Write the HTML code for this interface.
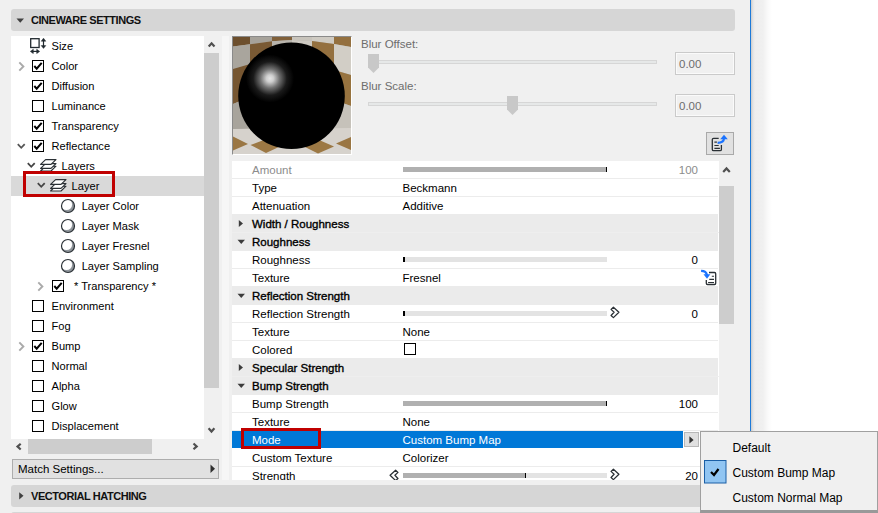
<!DOCTYPE html>
<html><head><meta charset="utf-8">
<style>
*{margin:0;padding:0;box-sizing:border-box}
html,body{width:878px;height:513px;overflow:hidden;background:#fff}
body{position:relative;font-family:"Liberation Sans",sans-serif;color:#000}
.a{position:absolute}
.t{position:absolute;white-space:nowrap;line-height:1}
#panel{position:absolute;left:0;top:0;width:750px;height:513px;background:#f0f0f0;overflow:hidden}
.hdr{position:absolute;left:11px;width:724px;height:22px;background:#d6d6d6;border-radius:3px}
.hdr .t{font-weight:bold;font-size:11px;letter-spacing:-0.45px;color:#111}
#tree{position:absolute;left:11px;top:36px;width:193px;height:403px;background:#fff;overflow:hidden}
#tree .t{font-size:11.5px}
.cb{position:absolute;width:12px;height:12px;border:1px solid #000;background:#fff}
.tbl{position:absolute;left:232px;top:161px;width:487px;height:319px;background:#fff;overflow:hidden}
.row{position:absolute;left:0;width:486px;height:18px;border-bottom:1px solid #ececec}
.grp{position:absolute;left:0;width:487px;height:18px;background:#ebebeb}
.tbl .t{font-size:11.5px}
</style></head><body>
<div id="panel">
  <!-- header -->
  <div class="hdr" style="top:9px">
    <svg class="a" style="left:5px;top:9px" width="9" height="5"><path d="M0.5 0.5 L8 0.5 L4.25 4.8 Z" fill="#404040"/></svg>
    <div class="t" style="left:20px;top:6px">CINEWARE SETTINGS</div>
  </div>

  <!-- tree -->
  <div id="tree"></div>
<div class="a" style="left:11px;top:176px;width:193px;height:20px;background:#d9d9d9"></div>
<svg class="a" style="left:29px;top:37px" width="20" height="17"><rect x="1.7" y="1.7" width="8.4" height="8.8" fill="none" stroke="#222a30" stroke-width="1.3"/><path d="M14.5 2.5 V10" stroke="#222a30" stroke-width="1.2"/><path d="M12.2 4.2 L14.5 1.2 L16.8 4.2 Z M12.2 8.6 L14.5 11.4 L16.8 8.6 Z" fill="#222a30" stroke="#222a30" stroke-width="0.5" stroke-linejoin="round"/><path d="M3 14.4 H9" stroke="#222a30" stroke-width="1.2"/><path d="M4.3 12.2 L1.3 14.4 L4.3 16.6 Z M7.7 12.2 L10.7 14.4 L7.7 16.6 Z" fill="#222a30" stroke="#222a30" stroke-width="0.5" stroke-linejoin="round"/></svg>
<div class="t" style="left:51.5px;top:41.1px;font-size:11.1px;">Size</div>
<svg class="a" style="left:18px;top:60px" width="8" height="12"><path d="M1.3 2.3 L5.4 6.5 L1.3 10.7" stroke="#aaaaaa" stroke-width="1.9" fill="none"/></svg>
<svg class="a" style="left:32px;top:60px" width="12" height="12"><rect x="0.5" y="0.5" width="11" height="11" fill="#fff" stroke="#000" stroke-width="1"/><path d="M2.3 6 L4.7 8.7 L9.7 2.9" stroke="#000" stroke-width="2" fill="none" stroke-linejoin="miter" stroke-linecap="butt"/></svg>
<div class="t" style="left:51.5px;top:61.1px;font-size:11.1px;">Color</div>
<svg class="a" style="left:32px;top:80px" width="12" height="12"><rect x="0.5" y="0.5" width="11" height="11" fill="#fff" stroke="#000" stroke-width="1"/><path d="M2.3 6 L4.7 8.7 L9.7 2.9" stroke="#000" stroke-width="2" fill="none" stroke-linejoin="miter" stroke-linecap="butt"/></svg>
<div class="t" style="left:51.5px;top:81.1px;font-size:11.1px;">Diffusion</div>
<svg class="a" style="left:32px;top:100px" width="12" height="12"><rect x="0.5" y="0.5" width="11" height="11" fill="#fff" stroke="#000" stroke-width="1"/></svg>
<div class="t" style="left:51.5px;top:101.1px;font-size:11.1px;">Luminance</div>
<svg class="a" style="left:32px;top:120px" width="12" height="12"><rect x="0.5" y="0.5" width="11" height="11" fill="#fff" stroke="#000" stroke-width="1"/><path d="M2.3 6 L4.7 8.7 L9.7 2.9" stroke="#000" stroke-width="2" fill="none" stroke-linejoin="miter" stroke-linecap="butt"/></svg>
<div class="t" style="left:51.5px;top:121.1px;font-size:11.1px;">Transparency</div>
<svg class="a" style="left:15.7px;top:140.5px" width="12" height="12"><path d="M1.8 3.2 L5.25 6.8 L8.7 3.2" stroke="#555" stroke-width="1.8" fill="none"/></svg>
<svg class="a" style="left:32px;top:140px" width="12" height="12"><rect x="0.5" y="0.5" width="11" height="11" fill="#fff" stroke="#000" stroke-width="1"/><path d="M2.3 6 L4.7 8.7 L9.7 2.9" stroke="#000" stroke-width="2" fill="none" stroke-linejoin="miter" stroke-linecap="butt"/></svg>
<div class="t" style="left:51.5px;top:141.1px;font-size:11.1px;">Reflectance</div>
<svg class="a" style="left:26px;top:160px" width="12" height="12"><path d="M1.8 3.2 L5.25 6.8 L8.7 3.2" stroke="#444" stroke-width="1.8" fill="none"/></svg>
<svg class="a" style="left:39.7px;top:159px" width="18" height="14"><path d="M5.6 7.199999999999999 H16 L11 12.0 H0.6 Z" fill="#fff" stroke="#2a3035" stroke-width="1.15" stroke-linejoin="round"/><path d="M5.6 4.6 H16 L11 9.4 H0.6 Z" fill="#fff" stroke="#2a3035" stroke-width="1.15" stroke-linejoin="round"/><path d="M5.6 0.6 H16 L11 5.4 H0.6 Z" fill="#fff" stroke="#2a3035" stroke-width="1.15" stroke-linejoin="round"/></svg>
<div class="t" style="left:61.6px;top:161.1px;font-size:11.1px;">Layers</div>
<svg class="a" style="left:36px;top:180px" width="12" height="12"><path d="M1.8 3.2 L5.25 6.8 L8.7 3.2" stroke="#444" stroke-width="1.8" fill="none"/></svg>
<svg class="a" style="left:49.7px;top:179px" width="18" height="14"><path d="M5.6 7.199999999999999 H16 L11 12.0 H0.6 Z" fill="#fff" stroke="#2a3035" stroke-width="1.15" stroke-linejoin="round"/><path d="M5.6 4.6 H16 L11 9.4 H0.6 Z" fill="#fff" stroke="#2a3035" stroke-width="1.15" stroke-linejoin="round"/><path d="M5.6 0.6 H16 L11 5.4 H0.6 Z" fill="#fff" stroke="#2a3035" stroke-width="1.15" stroke-linejoin="round"/></svg>
<div class="t" style="left:71.6px;top:181.1px;font-size:11.1px;">Layer</div>
<svg class="a" style="left:60px;top:198px" width="16" height="16"><circle cx="8" cy="8" r="6.5" fill="#8e949a"/><circle cx="6.5" cy="6.5" r="5.6" fill="#fff"/><circle cx="8" cy="8" r="6.5" fill="none" stroke="#2a3035" stroke-width="1.2"/></svg>
<div class="t" style="left:81.7px;top:201.1px;font-size:11.1px;">Layer Color</div>
<svg class="a" style="left:60px;top:218px" width="16" height="16"><circle cx="8" cy="8" r="6.5" fill="#8e949a"/><circle cx="6.5" cy="6.5" r="5.6" fill="#fff"/><circle cx="8" cy="8" r="6.5" fill="none" stroke="#2a3035" stroke-width="1.2"/></svg>
<div class="t" style="left:81.7px;top:221.1px;font-size:11.1px;">Layer Mask</div>
<svg class="a" style="left:60px;top:238px" width="16" height="16"><circle cx="8" cy="8" r="6.5" fill="#8e949a"/><circle cx="6.5" cy="6.5" r="5.6" fill="#fff"/><circle cx="8" cy="8" r="6.5" fill="none" stroke="#2a3035" stroke-width="1.2"/></svg>
<div class="t" style="left:81.7px;top:241.1px;font-size:11.1px;">Layer Fresnel</div>
<svg class="a" style="left:60px;top:258px" width="16" height="16"><circle cx="8" cy="8" r="6.5" fill="#8e949a"/><circle cx="6.5" cy="6.5" r="5.6" fill="#fff"/><circle cx="8" cy="8" r="6.5" fill="none" stroke="#2a3035" stroke-width="1.2"/></svg>
<div class="t" style="left:81.7px;top:261.1px;font-size:11.1px;">Layer Sampling</div>
<svg class="a" style="left:37px;top:280px" width="8" height="12"><path d="M1.3 2.3 L5.4 6.5 L1.3 10.7" stroke="#aaaaaa" stroke-width="1.9" fill="none"/></svg>
<svg class="a" style="left:52px;top:280px" width="12" height="12"><rect x="0.5" y="0.5" width="11" height="11" fill="#fff" stroke="#000" stroke-width="1"/><path d="M2.3 6 L4.7 8.7 L9.7 2.9" stroke="#000" stroke-width="2" fill="none" stroke-linejoin="miter" stroke-linecap="butt"/></svg>
<div class="t" style="left:74px;top:281.1px;font-size:11.1px;">* Transparency *</div>
<svg class="a" style="left:32px;top:300px" width="12" height="12"><rect x="0.5" y="0.5" width="11" height="11" fill="#fff" stroke="#000" stroke-width="1"/></svg>
<div class="t" style="left:51.5px;top:301.1px;font-size:11.1px;">Environment</div>
<svg class="a" style="left:32px;top:320px" width="12" height="12"><rect x="0.5" y="0.5" width="11" height="11" fill="#fff" stroke="#000" stroke-width="1"/></svg>
<div class="t" style="left:51.5px;top:321.1px;font-size:11.1px;">Fog</div>
<svg class="a" style="left:18px;top:340px" width="8" height="12"><path d="M1.3 2.3 L5.4 6.5 L1.3 10.7" stroke="#aaaaaa" stroke-width="1.9" fill="none"/></svg>
<svg class="a" style="left:32px;top:340px" width="12" height="12"><rect x="0.5" y="0.5" width="11" height="11" fill="#fff" stroke="#000" stroke-width="1"/><path d="M2.3 6 L4.7 8.7 L9.7 2.9" stroke="#000" stroke-width="2" fill="none" stroke-linejoin="miter" stroke-linecap="butt"/></svg>
<div class="t" style="left:51.5px;top:341.1px;font-size:11.1px;">Bump</div>
<svg class="a" style="left:32px;top:360px" width="12" height="12"><rect x="0.5" y="0.5" width="11" height="11" fill="#fff" stroke="#000" stroke-width="1"/></svg>
<div class="t" style="left:51.5px;top:361.1px;font-size:11.1px;">Normal</div>
<svg class="a" style="left:32px;top:380px" width="12" height="12"><rect x="0.5" y="0.5" width="11" height="11" fill="#fff" stroke="#000" stroke-width="1"/></svg>
<div class="t" style="left:51.5px;top:381.1px;font-size:11.1px;">Alpha</div>
<svg class="a" style="left:32px;top:400px" width="12" height="12"><rect x="0.5" y="0.5" width="11" height="11" fill="#fff" stroke="#000" stroke-width="1"/></svg>
<div class="t" style="left:51.5px;top:401.1px;font-size:11.1px;">Glow</div>
<svg class="a" style="left:32px;top:420px" width="12" height="12"><rect x="0.5" y="0.5" width="11" height="11" fill="#fff" stroke="#000" stroke-width="1"/></svg>
<div class="t" style="left:51.5px;top:421.1px;font-size:11.1px;">Displacement</div>
<div class="a" style="left:23px;top:171px;width:92px;height:26px;border:3px solid #c00000"></div>
  <!-- tree v-scrollbar -->
  <svg class="a" style="left:204px;top:36px" width="16" height="403">
    <rect x="0" y="17" width="15" height="335" fill="#cdcdcd"/>
    <path d="M4.7 10.5 L7.6 7.3 L10.5 10.5" stroke="#505050" stroke-width="2.2" fill="none"/>
    <path d="M4.6 392.3 L7.5 395.5 L10.4 392.3" stroke="#505050" stroke-width="2.2" fill="none"/>
  </svg>
  <!-- tree h-scrollbar -->
  <svg class="a" style="left:11px;top:439px" width="193" height="15">
    <rect x="17" y="0" width="124" height="15" fill="#cdcdcd"/>
    <path d="M9.7 4.7 L6.5 7.6 L9.7 10.5" stroke="#505050" stroke-width="2.2" fill="none"/>
    <path d="M182.5 4.5 L185.7 7.4 L182.5 10.3" stroke="#505050" stroke-width="2.2" fill="none"/>
  </svg>
  <!-- match settings -->
  <div class="a" style="left:12px;top:459px;width:207px;height:20px;background:#e1e1e1;border:1px solid #adadad"></div>
  <div class="t" style="left:18px;top:464px;font-size:11.5px">Match Settings...</div>
  <svg class="a" style="left:210px;top:464px" width="6" height="10"><path d="M0.5 0.5 L5 4.75 L0.5 9 Z" fill="#303030"/></svg>

  <!-- splitter -->
  <div class="a" style="left:222px;top:36px;width:7px;height:444px;background:#f6f6f6"></div>

  <!-- preview -->
  <div class="a" id="prev" style="left:232px;top:36px;width:120px;height:119px;background:#c8c4bc;border-top:1px solid #8a8a8a;border-left:1px solid #8a8a8a;border-right:1px solid #fff;border-bottom:1px solid #fff;overflow:hidden"><svg class="a" style="left:0;top:0" width="118" height="117"><rect width="118" height="117" fill="#b0aca4"/><polygon points="0.0,0.0 17.0,0.0 17.0,7.3 0.0,9.5" fill="#6d4f2d"/><polygon points="0.0,9.5 17.0,7.3 17.0,27.0 0.0,32.0" fill="#a9a59d"/><polygon points="0.0,32.0 17.0,27.0 17.0,60.0 0.0,67.0" fill="#765631"/><polygon points="0.0,67.0 17.0,60.0 23.0,89.0 0.0,94.0" fill="#a8a49c"/><polygon points="17.0,0.0 39.0,0.0 39.0,4.3 17.0,7.3" fill="#a6a29a"/><polygon points="17.0,7.3 39.0,4.3 39.0,33.0 17.0,38.0" fill="#7a5a34"/><polygon points="39.0,0.0 59.0,0.0 59.0,3.0 39.0,4.3" fill="#80603a"/><polygon points="39.0,4.3 59.0,3.0 59.0,23.0 39.0,23.0" fill="#b8b4ac"/><polygon points="59.0,0.0 79.0,0.0 79.0,4.0 59.0,3.0" fill="#c8c4bc"/><polygon points="59.0,3.0 79.0,4.0 79.0,23.0 59.0,23.0" fill="#cdc9c1"/><polygon points="79.0,0.0 101.0,0.0 101.0,7.0 79.0,4.0" fill="#cfcbc3"/><polygon points="79.0,4.0 101.0,7.0 101.0,33.0 79.0,25.0" fill="#94703f"/><polygon points="101.0,0.0 118.0,0.0 118.0,10.0 101.0,7.0" fill="#94703f"/><polygon points="101.0,7.0 118.0,10.0 118.0,38.0 101.0,33.0" fill="#d2cec6"/><polygon points="101.0,33.0 118.0,38.0 118.0,69.0 101.0,63.0" fill="#97733f"/><polygon points="101.0,63.0 118.0,69.0 118.0,93.0 97.0,91.0" fill="#c6c2ba"/><polygon points="0.0,92.0 118.0,91.0 118.0,117.0 0.0,117.0" fill="#d6d2cc"/><polygon points="0.0,99.5 15.0,107.0 0.0,113.5" fill="#9a7643"/><polygon points="17.5,108.0 32.0,102.5 48.0,109.0 33.0,116.0" fill="#9c7844"/><polygon points="70.0,109.0 85.0,102.5 101.0,109.5 85.0,116.5" fill="#9c7844"/><polygon points="103.0,106.5 118.0,100.0 118.0,113.0" fill="#9a7643"/><defs><radialGradient id="hl" gradientUnits="userSpaceOnUse" cx="37" cy="41.5" r="24"><stop offset="0" stop-color="#e6e6e6"/><stop offset="0.15" stop-color="#cfcfcf"/><stop offset="0.4" stop-color="#707070"/><stop offset="0.7" stop-color="#1a1a1a"/><stop offset="1" stop-color="#000"/></radialGradient></defs><circle cx="58.5" cy="58.8" r="53.3" fill="#000"/><circle cx="37" cy="41.5" r="24" fill="url(#hl)"/></svg></div>

  <!-- blur -->
  <div class="t" style="left:361px;top:39px;font-size:11.5px;color:#6d6d6d">Blur Offset:</div>
  <div class="t" style="left:361px;top:81px;font-size:11.5px;color:#6d6d6d">Blur Scale:</div>
  <div class="a" style="left:368px;top:60px;width:289px;height:4px;background:#e6e8e8;border:1px solid #d6d6d6"></div>
  <div class="a" style="left:368px;top:102px;width:289px;height:4px;background:#e6e8e8;border:1px solid #d6d6d6"></div>
  <svg class="a" style="left:368px;top:54px" width="11" height="20"><path d="M0 0 H11 V13.5 L5.5 19 L0 13.5 Z" fill="#c8c8c8"/></svg>
  <svg class="a" style="left:507px;top:96px" width="11" height="20"><path d="M0 0 H11 V13.5 L5.5 19 L0 13.5 Z" fill="#c8c8c8"/></svg>
  <div class="a" style="left:675px;top:52px;width:60px;height:23px;border:1px solid #cacaca;box-shadow:inset 0 0 0 1px #fafafa;background:#f0f0f0"></div>
  <div class="a" style="left:675px;top:94px;width:60px;height:23px;border:1px solid #cacaca;box-shadow:inset 0 0 0 1px #fafafa;background:#f0f0f0"></div>
  <div class="t" style="left:679px;top:59px;font-size:11.5px;color:#6d6d6d">0.00</div>
  <div class="t" style="left:679px;top:101px;font-size:11.5px;color:#6d6d6d">0.00</div>
  <!-- small button -->
  <div class="a" style="left:706px;top:132px;width:28px;height:23px;background:#e1e1e1;border:1px solid #a9a9a9"></div>
  <svg class="a" style="left:706px;top:132px" width="28" height="23">
    <path d="M12.7 6.3 H7.6 Q6.3 6.3 6.3 7.6 V17.4 Q6.3 18.7 7.6 18.7 H14.1 Q15.4 18.7 15.4 17.4 V12.9" fill="none" stroke="#2a3035" stroke-width="1.3"/>
    <path d="M8.4 10.2 H10.9 M8.4 13.5 H12.7 M8.4 16.4 H13.9" stroke="#2a3035" stroke-width="1.2"/>
    <path d="M11.6 10.9 C15 10.9 17.9 10 18 6" fill="none" stroke="#1a73ff" stroke-width="2.2"/>
    <path d="M14.2 7.2 L18 2.8 L21.8 7.2 Z" fill="#1a73ff"/>
  </svg>

  <!-- table -->
  <div class="tbl" id="tbl"><div class="a" style="left:0;top:17px;width:486px;height:1px;background:#ececec"></div>
<div class="t" style="left:20px;top:4.27px;font-size:11.5px;color:#8c8c8c;">Amount</div>
<div class="a" style="left:0;top:35px;width:486px;height:1px;background:#ececec"></div>
<div class="t" style="left:20px;top:22.27px;font-size:11.5px;color:#000;">Type</div>
<div class="a" style="left:0;top:53px;width:486px;height:1px;background:#ececec"></div>
<div class="t" style="left:20px;top:40.27px;font-size:11.5px;color:#000;">Attenuation</div>
<div class="a" style="left:0;top:53px;width:486px;height:19px;background:#ebebeb"></div>
<svg class="a" style="left:6px;top:58px" width="6" height="9"><path d="M0.8 1 L5 4.5 L0.8 8 Z" fill="#3c3c3c"/></svg>
<div class="t" style="left:20px;top:58.27px;font-size:11.5px;color:#000;-webkit-text-stroke:0.35px #000;">Width / Roughness</div>
<div class="a" style="left:0;top:71px;width:486px;height:19px;background:#ebebeb"></div>
<div class="a" style="left:0;top:71px;width:487px;height:1px;background:#eeeeee"></div>
<svg class="a" style="left:5px;top:78px" width="9" height="6"><path d="M0.5 0.8 L8 0.8 L4.25 5 Z" fill="#3c3c3c"/></svg>
<div class="t" style="left:20px;top:76.27px;font-size:11.5px;color:#000;-webkit-text-stroke:0.35px #000;">Roughness</div>
<div class="a" style="left:0;top:107px;width:486px;height:1px;background:#ececec"></div>
<div class="t" style="left:20px;top:94.27px;font-size:11.5px;color:#000;">Roughness</div>
<div class="a" style="left:0;top:125px;width:486px;height:1px;background:#ececec"></div>
<div class="t" style="left:20px;top:112.27px;font-size:11.5px;color:#000;">Texture</div>
<div class="a" style="left:0;top:125px;width:486px;height:19px;background:#ebebeb"></div>
<svg class="a" style="left:5px;top:132px" width="9" height="6"><path d="M0.5 0.8 L8 0.8 L4.25 5 Z" fill="#3c3c3c"/></svg>
<div class="t" style="left:20px;top:130.27px;font-size:11.5px;color:#000;-webkit-text-stroke:0.35px #000;">Reflection Strength</div>
<div class="a" style="left:0;top:161px;width:486px;height:1px;background:#ececec"></div>
<div class="t" style="left:20px;top:148.27px;font-size:11.5px;color:#000;">Reflection Strength</div>
<div class="a" style="left:0;top:179px;width:486px;height:1px;background:#ececec"></div>
<div class="t" style="left:20px;top:166.27px;font-size:11.5px;color:#000;">Texture</div>
<div class="a" style="left:0;top:197px;width:486px;height:1px;background:#ececec"></div>
<div class="t" style="left:20px;top:184.27px;font-size:11.5px;color:#000;">Colored</div>
<div class="a" style="left:0;top:197px;width:486px;height:19px;background:#ebebeb"></div>
<svg class="a" style="left:6px;top:202px" width="6" height="9"><path d="M0.8 1 L5 4.5 L0.8 8 Z" fill="#3c3c3c"/></svg>
<div class="t" style="left:20px;top:202.27px;font-size:11.5px;color:#000;-webkit-text-stroke:0.35px #000;">Specular Strength</div>
<div class="a" style="left:0;top:215px;width:486px;height:19px;background:#ebebeb"></div>
<div class="a" style="left:0;top:215px;width:487px;height:1px;background:#eeeeee"></div>
<svg class="a" style="left:5px;top:222px" width="9" height="6"><path d="M0.5 0.8 L8 0.8 L4.25 5 Z" fill="#3c3c3c"/></svg>
<div class="t" style="left:20px;top:220.27px;font-size:11.5px;color:#000;-webkit-text-stroke:0.35px #000;">Bump Strength</div>
<div class="a" style="left:0;top:251px;width:486px;height:1px;background:#ececec"></div>
<div class="t" style="left:20px;top:238.27px;font-size:11.5px;color:#000;">Bump Strength</div>
<div class="a" style="left:0;top:269px;width:486px;height:1px;background:#ececec"></div>
<div class="t" style="left:20px;top:256.27px;font-size:11.5px;color:#000;">Texture</div>
<div class="a" style="left:0;top:270px;width:451px;height:17px;background:#0078d7"></div>
<div class="t" style="left:20px;top:274.27px;font-size:11.5px;color:#fff;">Mode</div>
<div class="a" style="left:0;top:305px;width:486px;height:1px;background:#ececec"></div>
<div class="t" style="left:20px;top:292.27px;font-size:11.5px;color:#000;">Custom Texture</div>
<div class="a" style="left:0;top:323px;width:486px;height:1px;background:#ececec"></div>
<div class="t" style="left:20px;top:310.27px;font-size:11.5px;color:#000;">Strength</div>
<div class="t" style="left:170.5px;top:22.27px;font-size:11.5px;color:#000;">Beckmann</div>
<div class="t" style="left:170.5px;top:40.27px;font-size:11.5px;color:#000;">Additive</div>
<div class="t" style="left:170.5px;top:112.27px;font-size:11.5px;color:#000;">Fresnel</div>
<div class="t" style="left:170.5px;top:166.27px;font-size:11.5px;color:#000;">None</div>
<div class="t" style="left:170.5px;top:256.27px;font-size:11.5px;color:#000;">None</div>
<div class="t" style="left:170.5px;top:274.27px;font-size:11.5px;color:#fff;">Custom Bump Map</div>
<div class="t" style="left:170.5px;top:292.27px;font-size:11.5px;color:#000;">Colorizer</div>
<div class="t" style="right:21px;top:4.27px;font-size:11.5px;color:#8c8c8c">100</div>
<div class="t" style="right:21px;top:94.27px;font-size:11.5px;color:#000">0</div>
<div class="t" style="right:21px;top:148.27px;font-size:11.5px;color:#000">0</div>
<div class="t" style="right:21px;top:238.27px;font-size:11.5px;color:#000">100</div>
<div class="t" style="right:21px;top:310.27px;font-size:11.5px;color:#000">20</div>
<div class="a" style="left:171px;top:6px;width:204px;height:5px;background:#b0b0b0"></div><div class="a" style="left:373.5px;top:6px;width:1.6px;height:5px;background:#000"></div>
<div class="a" style="left:172.6px;top:95.5px;width:202.4px;height:5px;background:#e3e3e3"></div><div class="a" style="left:171px;top:95.5px;width:1.5999999999999943px;height:5px;background:#b0b0b0"></div><div class="a" style="left:171.1px;top:95.5px;width:1.6px;height:5px;background:#000"></div>
<div class="a" style="left:172.6px;top:149.5px;width:202.4px;height:5px;background:#e3e3e3"></div><div class="a" style="left:171px;top:149.5px;width:1.5999999999999943px;height:5px;background:#b0b0b0"></div><div class="a" style="left:171.1px;top:149.5px;width:1.6px;height:5px;background:#000"></div>
<svg class="a" style="left:378px;top:145px" width="11" height="13"><polygon points="3.4,1.2 8.9,6.3 3.4,11.6 1.05,9.5 4.1,6.3 1.05,3.4" fill="#fff" stroke="#2a3035" stroke-width="1.25" stroke-linejoin="round"/></svg>
<div class="a" style="left:171px;top:240px;width:204px;height:5px;background:#b0b0b0"></div><div class="a" style="left:373.5px;top:240px;width:1.6px;height:5px;background:#000"></div>
<div class="a" style="left:294px;top:312px;width:81px;height:5px;background:#e3e3e3"></div><div class="a" style="left:171px;top:312px;width:123px;height:5px;background:#b0b0b0"></div><div class="a" style="left:292.5px;top:312px;width:1.6px;height:5px;background:#000"></div>
<svg class="a" style="left:378px;top:307px" width="11" height="13"><polygon points="3.4,1.2 8.9,6.3 3.4,11.6 1.05,9.5 4.1,6.3 1.05,3.4" fill="#fff" stroke="#2a3035" stroke-width="1.25" stroke-linejoin="round"/></svg>
<svg class="a" style="left:157px;top:308px" width="11" height="13"><polygon points="6.6,1.2 1.1,6.3 6.6,11.6 8.95,9.5 5.9,6.3 8.95,3.4" fill="#fff" stroke="#2a3035" stroke-width="1.25" stroke-linejoin="round"/></svg>
<svg class="a" style="left:172px;top:182px" width="12" height="12"><rect x="0.5" y="0.5" width="11" height="11" fill="#fff" stroke="#000" stroke-width="1"/></svg>
<div class="a" style="left:452px;top:271px;width:15px;height:15px;background:#e0e0e0;border:1px solid #b8b8b8"></div>
<svg class="a" style="left:456.5px;top:274.5px" width="7" height="9"><path d="M0.4 0.2 L4.6 3.9 L0.4 7.6 Z" fill="#333"/></svg>
<svg class="a" style="left:468px;top:108px" width="18" height="18"><path d="M9 3.5 H14.5 Q15.7 3.5 15.7 4.7 V14.3 Q15.7 15.5 14.5 15.5 H7.5 Q6.3 15.5 6.3 14.3 V11" fill="none" stroke="#2a3035" stroke-width="1.3"/><path d="M11.8 7.3 H14 M9.3 10.4 H14 M8.1 13.5 H14" stroke="#2a3035" stroke-width="1.1"/><path d="M1.1 1.9 C4 1.9 6.4 2.6 7 6.2" fill="none" stroke="#1a73ff" stroke-width="2.2"/><path d="M3.5 5.3 L10.4 5.3 L7 9.7 Z" fill="#1a73ff"/></svg></div>
  <!-- table scrollbar -->
  <svg class="a" style="left:719px;top:161px" width="16" height="319">
    <rect x="0" y="25" width="15" height="138" fill="#cdcdcd"/>
    <path d="M4.2 10.9 L7.5 7.4 L10.8 10.9" stroke="#505050" stroke-width="2.2" fill="none"/>
  </svg>

  <div class="a" style="left:241px;top:428px;width:80px;height:21px;border:3px solid #c00000"></div>
  <!-- vectorial hatching -->
  <div class="hdr" style="top:485px">
    <svg class="a" style="left:7.8px;top:6.5px" width="6" height="9"><path d="M0.2 0.2 L4.5 3.85 L0.2 7.5 Z" fill="#404040"/></svg>
    <div class="t" style="left:20px;top:6px">VECTORIAL HATCHING</div>
  </div>
  <div class="hdr" style="top:512px"></div>
</div>
<!-- blue line + shadow -->
<div class="a" style="left:750px;top:0;width:1px;height:513px;background:#1e7ad8"></div>
<div class="a" style="left:751px;top:0;width:22px;height:513px;background:linear-gradient(to right,#cbcbcb 0px,#e4e4e4 2px,#eeeeee 4px,#f0f0f0 12px,#fafafa 17px,#fff 21px)"></div>

<!-- popup -->
<div class="a" style="left:700px;top:431px;width:178px;height:82px;background:#f0f0f0;border:1px solid #a0a0a0;border-bottom:3px solid #999"></div>
<svg class="a" style="left:704px;top:460px" width="23" height="24"><rect x="0.5" y="0.5" width="21.5" height="22.5" fill="#91c5f2" stroke="#1b5fa6" stroke-width="1"/><path d="M7 12 L10 15 L14.5 9" stroke="#000" stroke-width="2.2" fill="none"/></svg>
<div class="t" style="left:732.5px;top:441.6px;font-size:12px">Default</div>
<div class="t" style="left:732.5px;top:466.6px;font-size:12px">Custom Bump Map</div>
<div class="t" style="left:732.5px;top:491.6px;font-size:12px">Custom Normal Map</div>
</body></html>
